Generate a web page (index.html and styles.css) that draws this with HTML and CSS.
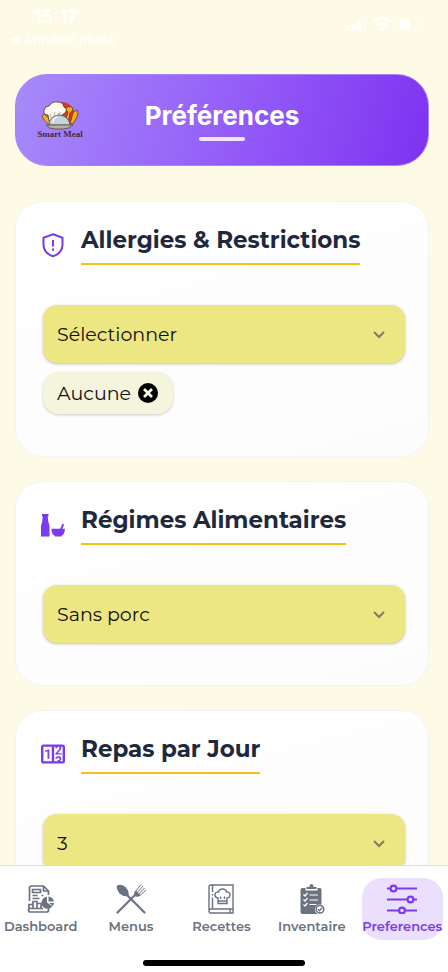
FILE: index.html
```html
<!DOCTYPE html>
<html lang="fr">
<head>
<meta charset="utf-8">
<meta name="viewport" content="width=device-width, initial-scale=1">
<title>Préférences</title>
<link rel="stylesheet" href="styles.css">
</head>
<body>
<div class="status">
  <div class="status-left">
    <span class="clock">15:17</span>
    <span class="back"><svg width="9" height="9" viewBox="0 0 9 9"><path d="M9 0v9L0 4.500z" fill="currentColor"/></svg>Appareil photo</span>
  </div>
  <svg class="status-icons" width="82" height="16" viewBox="0 0 82 16" fill="currentColor">
    <rect x="0" y="10" width="4" height="5" rx="1"/><rect x="5.500" y="7.500" width="4" height="7.500" rx="1"/><rect x="11" y="4.500" width="4" height="10.500" rx="1"/><rect x="16.500" y="1" width="4" height="14" rx="1" opacity=".25"/>
    <g fill="none" stroke="currentColor" stroke-width="2.600"><path d="M27.500 6a12.500 12.500 0 0 1 17 0M30.500 9.500a8 8 0 0 1 11 0"/></g><path d="M32.800 12q3.200-2.600 6.400 0L36 15.200z"/>
    <rect x="52.500" y="1.500" width="24" height="13" rx="4" fill="none" stroke="currentColor" opacity=".35"/><rect x="54" y="3" width="10" height="10" rx="2.500"/><path d="M78 6v4q3-2 0-4" opacity=".35"/>
  </svg>
</div>
<main class="content">
  <header class="hero">
    <svg class="logo" width="46" height="38" viewBox="0 0 46 38" role="img" aria-label="Smart Meal">
      <circle cx="25" cy="13.500" r="12.500" fill="#d8392b"/>
      <path d="M6 17q-2-3 1-4l6 5 2 6q-6-1-9-7z" fill="#f5ae16" stroke="#5d351b" stroke-width=".7"/>
      <path d="M28 21l3-10q-4-3-1-5 4-1 6 1 0 3-3 5l-2 10zM33 22l2-6q0-5 5-7 2 2 0 7l-4 7z" fill="#f5ae16" stroke="#6b3b16" stroke-width=".8"/>
      <path d="M11 14q-5 0-4-5 1-4 5-4 3-5 9-4 5 0 6 5 4 2 1 6l-3 2-2 5-11 1z" fill="#fffaf0" stroke="#55402f" stroke-width=".9"/>
      <path d="M13 13l1 4M18 11l-1 4M22 13l2-2" fill="none" stroke="#a79686" stroke-width=".7"/>
      <path d="M12 24q0-9 10-10 10 1 11 10z" fill="#c6d2dc" stroke="#4e5962" stroke-width=".8"/>
      <path d="M16 22q0-5 4-6" fill="none" stroke="#fff" stroke-width="1.200"/>
      <circle cx="22" cy="13.500" r="1" fill="#dce4e9" stroke="#4e5962" stroke-width=".5"/>
      <path d="M9 24h27q-4 4-10 4h-8q-6 0-9-4z" fill="#b6b0a8" stroke="#594636" stroke-width=".8"/>
      <text class="logo-text" x="23" y="36" text-anchor="middle">Smart Meal</text>
    </svg>
    <h1 class="hero-title">Préférences</h1>
  </header>

  <section class="card">
    <div class="card-head">
      <svg class="card-icon" viewBox="0 0 24 24" fill="none" stroke="currentColor" stroke-width="2"><path d="M12 1.200l9.500 3.500v7c0 5-3.500 9.500-9.500 11.500C6 21.200 2.500 16.700 2.500 11.700v-7z"/><path d="M12 7v6.500M12 15.500v2.200"/></svg>
      <h2 class="card-title"><label for="allergies">Allergies &amp; Restrictions</label></h2>
    </div>
    <div class="field">
      <select id="allergies" class="select"><option>Sélectionner</option></select>
      <svg class="chevron" viewBox="0 0 14 14"><path d="M2 5l5 5 5-5"/></svg>
    </div>
    <div class="chip">Aucune
      <button class="chip-remove" type="button" aria-label="Retirer Aucune"><svg width="20" height="20" viewBox="0 0 20 20"><circle cx="10" cy="10" r="10" fill="#000"/><path d="M6 6l8 8M14 6l-8 8" stroke="#f4f5dc" stroke-width="2.800"/></svg></button>
    </div>
  </section>

  <section class="card">
    <div class="card-head">
      <svg class="card-icon" viewBox="0 0 24 24" fill="currentColor"><path d="M1 1h6.500v2.500h-.8L7.200 8l1.300 5v10.500H0V13l1.300-5 .5-4.500H1zM10.500 15.800h8.700l2.300-5 1.700.8-2 4.200h2.600v1.700q-.5 4-3.300 5.300v.7h-6.600v-.7q-3-1.300-3.400-5.300z"/></svg>
      <h2 class="card-title"><label for="regime">Régimes Alimentaires</label></h2>
    </div>
    <div class="field">
      <select id="regime" class="select"><option>Sans porc</option></select>
      <svg class="chevron" viewBox="0 0 14 14"><path d="M2 5l5 5 5-5"/></svg>
    </div>
  </section>

  <section class="card">
    <div class="card-head">
      <svg class="card-icon" viewBox="2 1.200 20 21.600" fill="currentColor"><path d="M4 4h16a2 2 0 0 1 2 2v12a2 2 0 0 1-2 2H4a2 2 0 0 1-2-2V6a2 2 0 0 1 2-2m0 2v12h7V6H4m16 12V6h-1.240c.24.54.19 1.070.19 1.130-.07.67-.54 1.370-.71 1.620l-2.330 2.550 3.320-.02.01 1.220-5.200-.03-.04-1s3.050-3.230 3.200-3.520c.14-.28.71-1.950-.7-1.950-1.230.05-1.090 1.300-1.090 1.300l-1.540.01s.01-.66.38-1.310H13v12h2.580l-.01-.86.97-.01s.91-.16.92-1.050c.04-1-.81-1-.96-1-.13 0-1.070.05-1.070.87h-1.520s.04-2.060 2.590-2.060c2.600 0 2.460 2.020 2.460 2.020s.04 1.250-1.110 1.720l.52.37H20M8.920 16h-1.500V9.800l-1.920.6V9.160L8.750 8h.17v8z"/></svg>
      <h2 class="card-title"><label for="repas">Repas par Jour</label></h2>
    </div>
    <div class="field">
      <select id="repas" class="select"><option>3</option></select>
      <svg class="chevron" viewBox="0 0 14 14"><path d="M2 5l5 5 5-5"/></svg>
    </div>
  </section>
</main>
<nav class="tabs">
  <div class="tab-row">
    <a class="tab" href="#dashboard">
      <svg class="tab-icon" viewBox="0 0 30 30" fill="none" stroke="currentColor" stroke-width="1.700"><path d="M3.500 17V4q0-2 2-2h12l5 5v4M22.500 22v4q0 2-2 2h-16q-2 0-2-2v-1M17.500 2v5h5M6.500 5.500h8v3h-8zM6.500 11.500h5M6.500 14.500h7M15.500 11.500h2"/><path d="M3 24.500v-4h4v4zM7 24.500v-7h4v7zM11 24.500v-5h4v5zM2 24.500h15"/><path d="M21 12.500v6l5.500 4q-3 3-7 2-4-1.500-4-6 .5-5 5.500-6z" fill="currentColor" stroke="none"/><path d="M22.500 17.500v-5q4.500.5 5.500 5zM23 19h5l-1 3z" fill="currentColor" stroke="none"/></svg>
      <span>Dashboard</span>
    </a>
    <a class="tab" href="#menus">
      <svg class="tab-icon" viewBox="0 0 30 30" fill="none" stroke="currentColor"><path d="M10 10l18.500 18.500M1.500 28.500L20 10" stroke-width="2.200" stroke-linecap="round"/><path d="M1 1.500q5-2 9 2 3.500 4 2.500 8.500-5 1-9-2.500-3.500-4-2.500-8z" fill="currentColor" stroke="none"/><path d="M18.500 7.500q-1 4 1 5 2 1 5-1l-4.500-5z" fill="currentColor" stroke="none"/><path d="M19.500 7.500l5.500-7M21 9l6-7M22.500 10.500l6-6.500M24 11.500l6-5.500" stroke-width="1"/></svg>
      <span>Menus</span>
    </a>
    <a class="tab" href="#recettes">
      <svg class="tab-icon" viewBox="0 0 30 30" fill="none" stroke="currentColor" stroke-width="1.400"><path d="M27 25H5q-2 0-2 2t2 2h22V1H5Q3 1 3 3v24M6.500 1v7M6.500 10v1.500M6.500 13.500V25M24 25v4"/><path d="M12 19.500V14q-3.500-.5-3-4 .8-2.500 3.600-2Q13 5 16.500 5T20.400 8q3-.5 3.600 2 .5 3.500-3 4v5.500zM12 17h9M14.500 12.500V15M18.500 12.500V15"/></svg>
      <span>Recettes</span>
    </a>
    <a class="tab" href="#inventaire">
      <svg class="tab-icon" viewBox="0 0 30 30"><path d="M5.500 4h3v2.500h12V4H23q1.500 0 1.500 1.500V21a5 5 0 0 0-4 9h-15q-2 0-2-2V6q0-2 2-2z" fill="currentColor"/><path d="M9.500 5V3h3q0-3 2-3t2 3h3v2z" fill="currentColor"/><g fill="none" stroke="#fff" stroke-width="1.200"><path d="M6.500 10.500L8 12l2.500-3M6.500 15.500L8 17l2.500-3M6.500 20.500L8 22l2.500-3M12.500 11H21M12.500 16H21M12.500 20.500h7"/></g><circle cx="23" cy="25.300" r="4.800" fill="#fff"/><circle cx="23" cy="25.300" r="3.800" fill="#fff" stroke="currentColor" stroke-width="1.500"/><path d="M21 25.300l1.500 1.500 2.600-3" fill="none" stroke="currentColor" stroke-width="1.400"/></svg>
      <span>Inventaire</span>
    </a>
    <a class="tab tab-active" href="#preferences" aria-current="page">
      <svg class="tab-icon" viewBox="0 0 30 30" fill="none" stroke="currentColor" stroke-width="2.200"><path d="M0 4.500h3.500M9.500 4.500H30M0 15.500h20.500M26.500 15.500H30M0 26.500h12M18 26.500h12"/><circle cx="6.500" cy="4.500" r="2.900"/><circle cx="23.500" cy="15.500" r="2.900"/><circle cx="15" cy="26.500" r="2.900"/></svg>
      <span>Preferences</span>
    </a>
  </div>
  <div class="home-bar"></div>
</nav>
</body>
</html>
```
FILE: styles.css
```css
* { box-sizing: border-box; }

body {
  margin: 0;
  height: 100vh;
  display: flex;
  flex-direction: column;
  background: #fdfae6;
  color: #111;
  font-family: Montserrat, Inter, "Open Sans", sans-serif;
}

.status {
  display: flex;
  justify-content: space-between;
  align-items: flex-start;
  flex: none;
  padding: 6px 20px 0 10px;
  height: 58px;
  color: #fffffb;
  font-family: Inter, sans-serif;
}

.status-left { display: flex; flex-direction: column; }
.clock { padding-left: 24px; font-size: 18px; line-height: 22px; font-weight: 700; }
.back { display: flex; align-items: center; gap: 5px; font-size: 13px; line-height: 22px; font-weight: 500; }
.status-icons { margin: 10px 0 0; }

.content {
  flex: 1;
  min-height: 0;
  overflow-y: auto;
  scrollbar-width: none;
  padding: 16px 19px 24px 15px;
  display: flex;
  flex-direction: column;
  gap: 24px;
}

.hero {
  flex: none;
  display: grid;
  grid-template-columns: 46px 1fr 46px;
  align-items: center;
  margin-bottom: 11px;
  padding: 20px 22px;
  min-height: 92px;
  border: 1px solid #a981fa;
  border-radius: 32px;
  background: linear-gradient(105deg, #a78bfa, #955ff8 50%, #7e32f0) border-box;
}

.logo { margin-left: -1px; }
.logo-text { font: bold 9px "Liberation Serif", serif; fill: #422b35; }

.hero-title {
  margin: 0;
  display: flex;
  flex-direction: column;
  align-items: center;
  gap: 4px;
  color: #fff;
  font: 700 26px/34px Inter, sans-serif;
}

.hero-title::after {
  content: "";
  width: 46px;
  height: 4px;
  border-radius: 2px;
  background: #efe6fe;
}

.card {
  flex: none;
  padding: 23px 23px 42px 27px;
  border: 1px solid #f3f4f6;
  border-radius: 28px;
  background: linear-gradient(165deg, #fff, #fcfcfd);
}

.card-head {
  display: flex;
  align-items: center;
  gap: 16px;
  margin-bottom: 40px;
  margin-left: -2px;
}

.card-icon { width: 24px; height: 26px; flex: none; color: #7c3aed; }

.card-title {
  margin: 0;
  padding-bottom: 8px;
  border-bottom: 2px solid #f5c211;
  color: #1f293b;
  font-size: 23px;
  line-height: 30px;
  font-weight: 700;
  white-space: nowrap;
}

.field { position: relative; }

.select {
  appearance: none;
  display: block;
  width: 100%;
  height: 58px;
  padding: 0 48px 0 14px;
  border: 0;
  border-radius: 14px;
  background: #ece782;
  box-shadow: 0 1px 3px rgba(0, 0, 0, .25);
  color: #111;
  font: inherit;
  font-size: 19px;
}

.chevron {
  position: absolute;
  right: 19px;
  top: 22px;
  width: 14px;
  height: 14px;
  fill: none;
  stroke: #7f7d67;
  stroke-width: 2;
  pointer-events: none;
}

.chip {
  display: inline-flex;
  align-items: center;
  gap: 7px;
  height: 42px;
  margin-top: 9px;
  padding: 0 15px 0 14px;
  border-radius: 16px;
  background: #f4f5dc;
  box-shadow: 0 1px 3px rgba(0, 0, 0, .2);
  font-size: 19px;
  vertical-align: top;
}

.chip-remove { display: flex; padding: 0; border: 0; background: none; }

.tabs {
  flex: none;
  border-top: 1px solid #dcdce0;
  background: #fff;
}

.tab-row {
  display: grid;
  grid-template-columns: repeat(5, minmax(0, 1fr));
  gap: 9px;
  padding: 12px 5px 0 0;
}

.tab {
  display: flex;
  flex-direction: column;
  align-items: center;
  gap: 3px;
  padding: 6px 0 5px;
  border-radius: 20px;
  color: #6b7280;
  font-size: 13px;
  line-height: 18px;
  font-weight: 600;
  text-decoration: none;
}

.tab-icon { width: 30px; height: 30px; }
.tab-active { background: #eadffc; color: #7c3aed; }

.home-bar {
  width: 36%;
  height: 6px;
  margin: 20px auto 6px;
  border-radius: 3px;
  background: #000;
}
```
